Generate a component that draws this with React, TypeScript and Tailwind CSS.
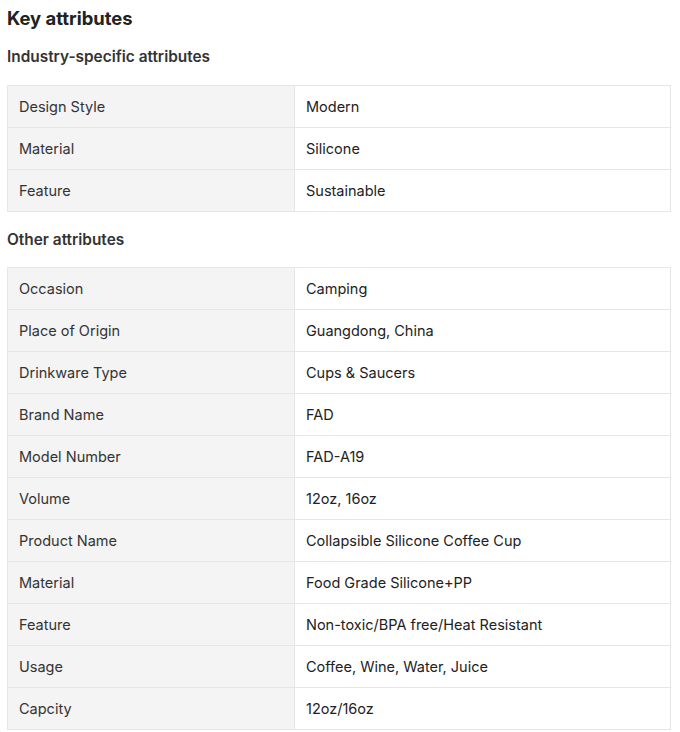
const industry: [string, string][] = [
  ['Design Style', 'Modern'],
  ['Material', 'Silicone'],
  ['Feature', 'Sustainable'],
];

const other: [string, string][] = [
  ['Occasion', 'Camping'],
  ['Place of Origin', 'Guangdong, China'],
  ['Drinkware Type', 'Cups & Saucers'],
  ['Brand Name', 'FAD'],
  ['Model Number', 'FAD-A19'],
  ['Volume', '12oz, 16oz'],
  ['Product Name', 'Collapsible Silicone Coffee Cup'],
  ['Material', 'Food Grade Silicone+PP'],
  ['Feature', 'Non-toxic/BPA free/Heat Resistant'],
  ['Usage', 'Coffee, Wine, Water, Juice'],
  ['Capcity', '12oz/16oz'],
];

function AttrTable({ rows }: { rows: [string, string][] }) {
  return (
    <div className="w-[664px] border-l border-t border-[#e6e6e6]">
      {rows.map(([label, value], i) => (
        <div key={i} className="flex h-[42px] border-b border-[#e6e6e6]">
          <div className="flex w-[287px] items-center border-r border-[#e6e6e6] bg-[#f4f4f4] pl-[11px] text-[14.5px] text-[#333]">
            {label}
          </div>
          <div className="flex flex-1 items-center border-r border-[#e6e6e6] bg-white pl-[11px] text-[14.5px] text-[#222]">
            {value}
          </div>
        </div>
      ))}
    </div>
  );
}

export default function App() {
  return (
    <div className="min-h-[732px] bg-white pl-[7px] pt-[6px]" style={{ fontFamily: 'Inter, "Noto Sans", sans-serif' }}>
      <h2 className="h-[24px] text-[18.4px] font-bold leading-[24px] text-[#222]">Key attributes</h2>
      <h3 className="mt-[17px] h-[20px] text-[15.4px] font-semibold leading-[20px] text-[#333]">Industry-specific attributes</h3>
      <div className="mt-[18px]">
        <AttrTable rows={industry} />
      </div>
      <h3 className="mt-[18px] h-[20px] text-[15.4px] font-semibold leading-[20px] text-[#333]">Other attributes</h3>
      <div className="mt-[17px]">
        <AttrTable rows={other} />
      </div>
    </div>
  );
}
